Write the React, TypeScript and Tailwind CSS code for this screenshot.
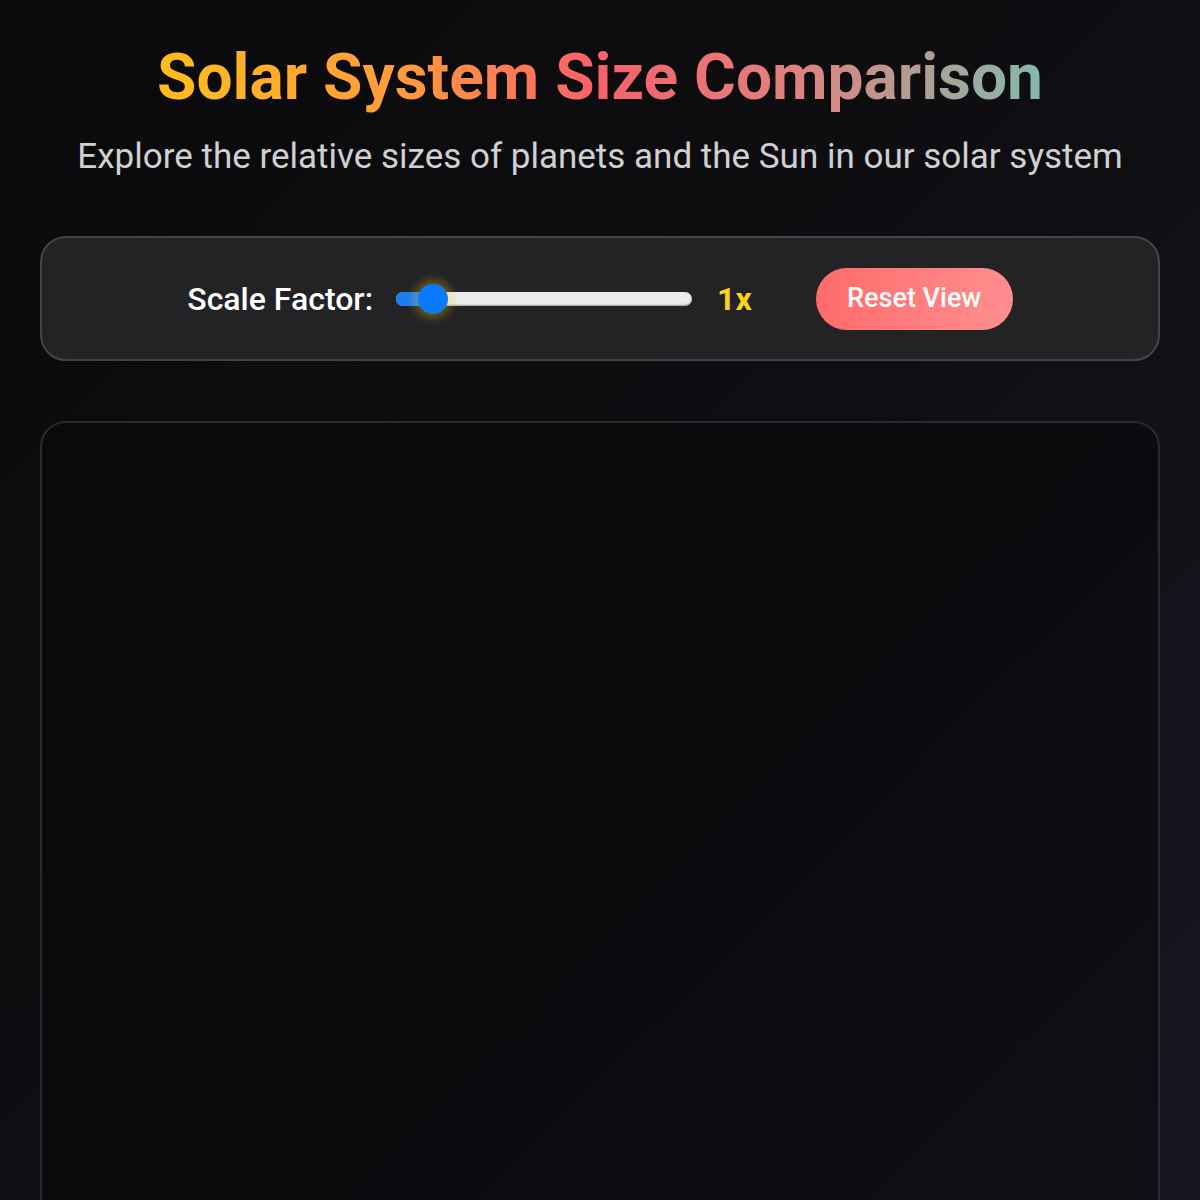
import React, { useState } from "react";

export default function App() {
  const [scale, setScale] = useState(1);
  return (
    <div
      className="min-h-screen w-full bg-[linear-gradient(135deg,#0a0a0b_0%,#0f0f13_50%,#181826_100%)] text-white"
      style={{ fontFamily: "Roboto, 'Liberation Sans', sans-serif" }}
    >
      <div className="px-10 pt-[40px] pb-10">
        <header className="flex flex-col items-center">
          <h1 className="inline-block bg-[linear-gradient(90deg,#ffbd1c_0%,#ff9a3c_28%,#f7606b_50%,#e0827e_72%,#84b9ad_100%)] bg-clip-text text-[64px] leading-[76px] font-bold text-transparent">
            Solar System Size Comparison
          </h1>
          <p className="mt-[19px] text-[35px] leading-[44px] text-[#d0d0d2]">
            Explore the relative sizes of planets and the Sun in our solar system
          </p>
        </header>

        <section className="mt-[57px] flex h-[125px] items-center justify-center gap-[64px] rounded-[26px] border-2 border-[#454549] bg-[#232326]">
          <div className="flex items-center">
            <span className="text-[32px] font-medium text-white">Scale Factor:</span>
            <div className="relative ml-[23px] h-[30px] w-[296px]">
              <div className="absolute left-0 right-0 top-[8px] h-[14px] rounded-full bg-[#ececec] shadow-[inset_0_-1px_2px_rgba(0,0,0,0.35)]" />
              <div className="absolute left-0 top-[8px] h-[14px] w-[38px] rounded-l-full bg-[linear-gradient(90deg,#1c7cf2,#1c7cf2_60%,#3b83d9)]" />
              <div className="absolute left-[22px] top-0 h-[30px] w-[30px] rounded-full bg-[#0a7bff] shadow-[0_0_10px_4px_rgba(255,200,0,0.35)]" />
              <input
                type="range"
                min={1}
                max={10}
                value={scale}
                onChange={(e) => setScale(Number(e.target.value))}
                className="absolute inset-0 opacity-0"
                aria-label="Scale factor"
              />
            </div>
            <span className="ml-[25px] text-[32px] font-bold text-[#ffd21a]">{scale}x</span>
          </div>
          <button
            onClick={() => setScale(1)}
            className="h-[62px] w-[197px] rounded-full bg-[linear-gradient(90deg,#ff6b6b,#ff8e8e)] text-[27px] font-medium text-white"
          >
            Reset View
          </button>
        </section>

        <section className="mt-[60px] h-[900px] rounded-[26px] border-2 border-[#2a2a2e] bg-[linear-gradient(135deg,#0a0a0c_0%,#0b0b0e_50%,#0f0f17_100%)]" />
      </div>
    </div>
  );
}
